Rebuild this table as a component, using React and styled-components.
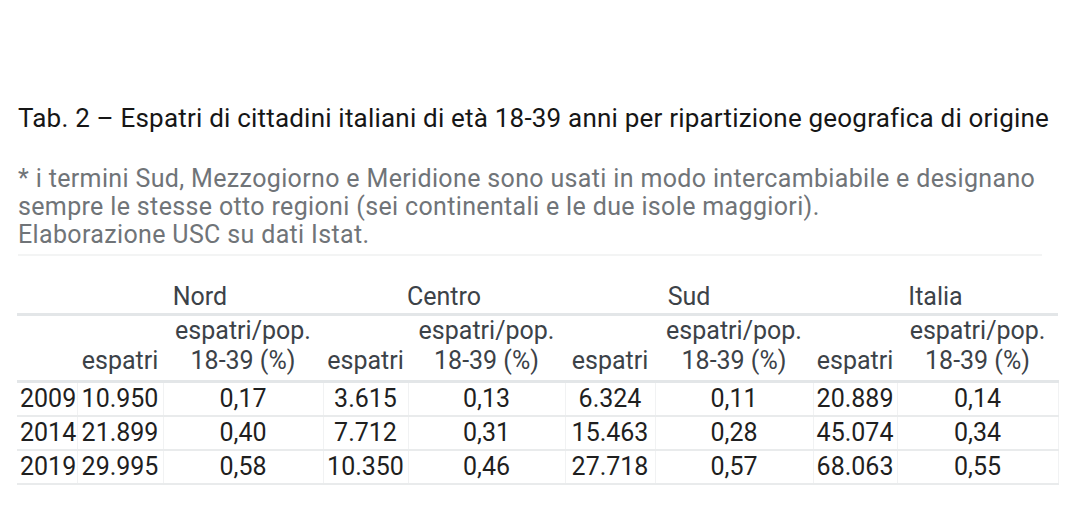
import React from 'react';
import styled, { createGlobalStyle } from 'styled-components';

const Global = createGlobalStyle`
  body {
    margin: 0;
    background: #fff;
    font-family: Roboto, "Liberation Sans", sans-serif;
  }
`;

const Page = styled.div`
  width: 1080px;
  height: 520px;
  box-sizing: border-box;
  padding: 103px 20px 0 17px;
  overflow: hidden;
`;

const Title = styled.h1`
  margin: 0 0 0 1px;
  font-size: 26px;
  line-height: 30px;
  font-weight: 400;
  letter-spacing: 0.2px;
  color: #161616;
  white-space: nowrap;
`;

const Notes = styled.div`
  margin: 32px 0 0 1px;
  padding-bottom: 5px;
  border-bottom: 2px solid #f3f4f4;
  width: 1024px;
  font-size: 25px;
  line-height: 28px;
  letter-spacing: 0.35px;
  color: #707478;
`;

const Table = styled.table`
  margin-top: 19px;
  border-collapse: collapse;
  table-layout: fixed;
  width: 1041px;
  font-size: 25px;
`;

const GroupCell = styled.th`
  font-weight: 400;
  color: #3c4248;
  text-align: center;
  height: 37px;
  padding: 0 0 1px;
  line-height: 30px;
  vertical-align: bottom;
  border-bottom: 3px solid #e3e6e8;
`;

const HeadCell = styled.th`
  font-weight: 400;
  color: #3c4248;
  text-align: center;
  padding: 0 0 4px;
  line-height: 30px;
  vertical-align: bottom;
  border-bottom: 3px solid #e3e6e8;
`;

const Row = styled.tr`
  border-bottom: 2px solid #e9ebec;
`;

const YearCell = styled.td`
  height: 32px;
  padding: 0 0 0 3px;
  color: #1f1f1f;
  text-align: left;
  line-height: 30px;
`;

const Cell = styled.td`
  padding: 0;
  color: #1f1f1f;
  text-align: center;
  line-height: 30px;
  border-left: 1px solid #f1f2f3;
  &:last-child {
    border-right: 1px solid #f1f2f3;
  }
`;

const widths = [60, 86, 160, 85, 157, 90, 158, 84, 161];
const groups = ['Nord', 'Centro', 'Sud', 'Italia'];
const rows = [
  ['2009', '10.950', '0,17', '3.615', '0,13', '6.324', '0,11', '20.889', '0,14'],
  ['2014', '21.899', '0,40', '7.712', '0,31', '15.463', '0,28', '45.074', '0,34'],
  ['2019', '29.995', '0,58', '10.350', '0,46', '27.718', '0,57', '68.063', '0,55'],
];

export default function App() {
  return (
    <Page>
      <Global />
      <Title>
        Tab. 2 – Espatri di cittadini italiani di età 18-39 anni per ripartizione geografica di origine
      </Title>
      <Notes>
        * i termini Sud, Mezzogiorno e Meridione sono usati in modo intercambiabile e designano
        sempre le stesse otto regioni (sei continentali e le due isole maggiori).
        <br />
        Elaborazione USC su dati Istat.
      </Notes>
      <Table>
        <colgroup>
          {widths.map((w, i) => (
            <col key={i} style={{ width: w }} />
          ))}
        </colgroup>
        <thead>
          <tr>
            <GroupCell />
            {groups.map(g => (
              <GroupCell key={g} colSpan={2}>{g}</GroupCell>
            ))}
          </tr>
          <tr>
            <HeadCell />
            {groups.map(g => (
              <React.Fragment key={g}>
                <HeadCell>espatri</HeadCell>
                <HeadCell>espatri/pop.<br />18-39 (%)</HeadCell>
              </React.Fragment>
            ))}
          </tr>
        </thead>
        <tbody>
          {rows.map(r => (
            <Row key={r[0]}>
              <YearCell>{r[0]}</YearCell>
              {r.slice(1).map((v, i) => (
                <Cell key={i}>{v}</Cell>
              ))}
            </Row>
          ))}
        </tbody>
      </Table>
    </Page>
  );
}
